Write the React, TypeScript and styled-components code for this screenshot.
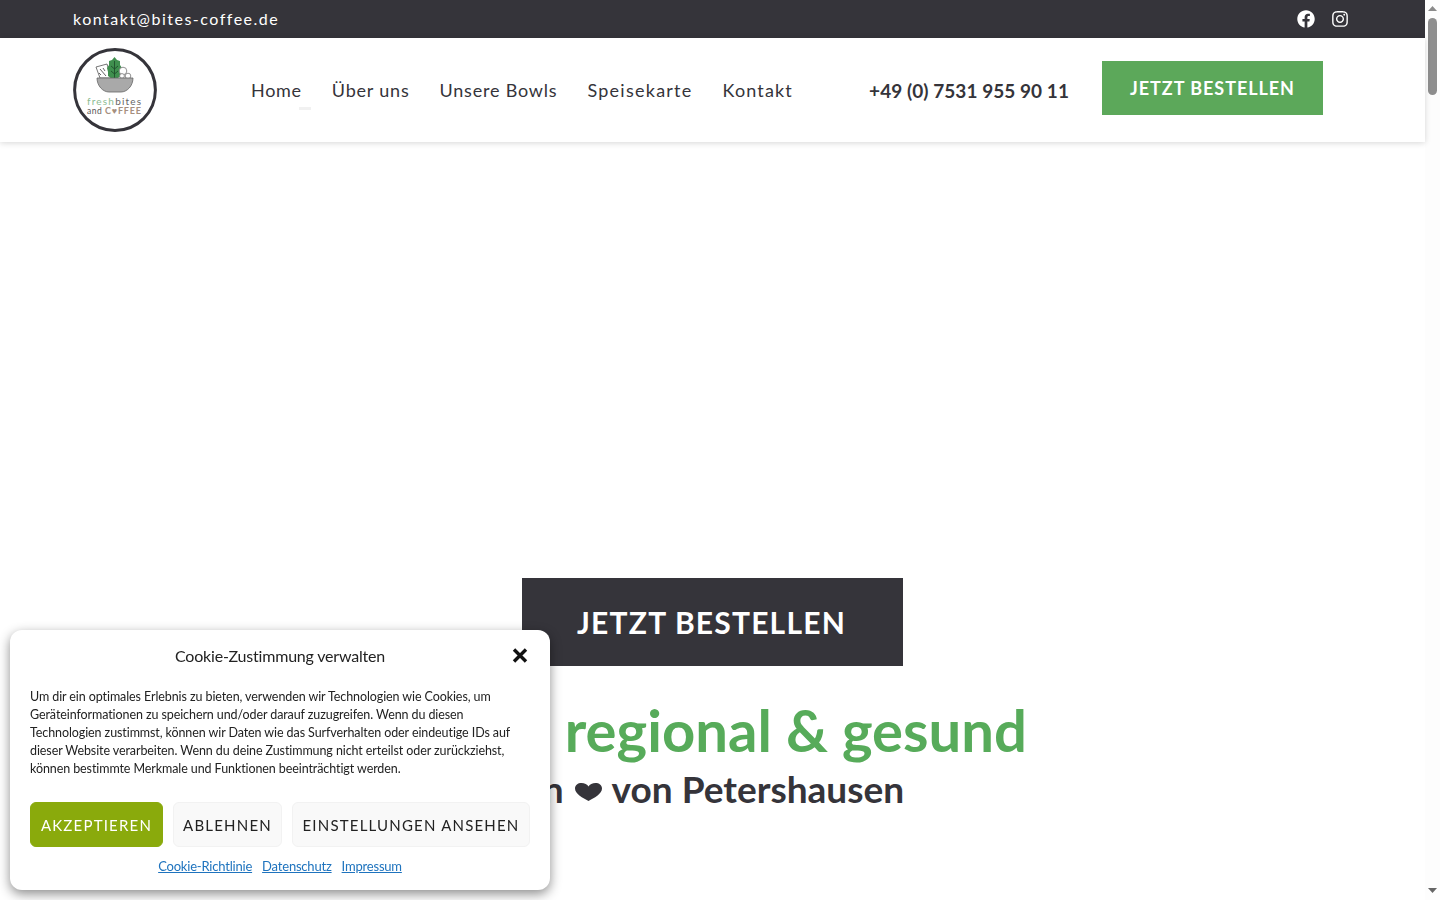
import React from "react";
import styled, { createGlobalStyle } from "styled-components";
import { FaFacebook, FaInstagram } from "react-icons/fa";

const GlobalStyle = createGlobalStyle`
  html, body {
    height: 100%;
    overflow: hidden;
  }
  body {
    margin: 0;
    background: #fff;
    font-family: "Lato", "Open Sans", sans-serif;
    color: #35343a;
  }
`;

const Page = styled.div`
  height: 100vh;
  display: flex;
  overflow: hidden;
`;

const Content = styled.div`
  flex: 1;
  min-width: 0;
`;

// the window's own scrollbar, headless chrome does not paint one
const ScrollRail = styled.div`
  width: 15px;
  flex: none;
  display: flex;
  flex-direction: column;
  align-items: center;
  background: #fdfdfd;
  padding: 6px 0 7px;
  box-sizing: border-box;
`;

const ScrollArrow = styled.svg`
  width: 9px;
  height: 5px;
  flex: none;
`;

const ScrollThumb = styled.div`
  width: 9px;
  height: 77px;
  margin-top: 7px;
  margin-bottom: auto;
  border-radius: 5px;
  background: #8e8e8e;
`;

const TopBar = styled.div`
  height: 38px;
  background: #35343a;
  display: flex;
  align-items: center;
  justify-content: space-between;
  padding: 0 76px 0 73px;
`;

const Mail = styled.a`
  color: #fff;
  font-size: 16px;
  letter-spacing: 1.5px;
  text-decoration: none;
  margin-top: -2px;
`;

const Socials = styled.div`
  display: flex;
  align-items: center;
  gap: 16px;
  color: #fff;
  font-size: 18px;
  line-height: 0;
`;

const Header = styled.header`
  position: relative;
  height: 104px;
  background: #fff;
  display: flex;
  align-items: center;
  padding: 0 102px 0 73px;
  box-shadow: 0 1px 6px rgba(0, 0, 0, 0.16);
`;

const Logo = styled.svg`
  width: 84px;
  height: 84px;
  flex: none;
`;

const LogoText = styled.text<{ $fill: string; $size: number; $weight?: number; $spacing?: number }>`
  fill: ${(p) => p.$fill};
  font-size: ${(p) => p.$size}px;
  font-weight: ${(p) => p.$weight ?? 400};
  letter-spacing: ${(p) => p.$spacing ?? 0}px;
  font-family: "Lato", sans-serif;
`;

const Nav = styled.nav`
  display: flex;
  align-items: center;
  gap: 30px;
  margin-left: 94px;
  position: relative;
`;

const NavLink = styled.a<{ $spacing: number }>`
  color: #35343a;
  font-size: 18px;
  letter-spacing: ${(p) => p.$spacing}px;
  text-decoration: none;
  white-space: nowrap;
`;

const NavMark = styled.span`
  position: absolute;
  left: 48px;
  top: 28px;
  width: 12px;
  height: 3px;
  background: #f1f1f1;
`;

const Phone = styled.div`
  margin-left: auto;
  margin-right: 33px;
  font-size: 19px;
  font-weight: 700;
  letter-spacing: 0.05px;
  white-space: nowrap;
`;

const OrderButton = styled.a`
  width: 221px;
  height: 54px;
  margin-bottom: 4px;
  background: #5ca85a;
  color: #fff;
  display: flex;
  align-items: center;
  justify-content: center;
  font-size: 18px;
  font-weight: 700;
  letter-spacing: 0.95px;
  padding-bottom: 1px;
  box-sizing: border-box;
  flex: none;
`;

const Hero = styled.main`
  padding-top: 436px;
  display: flex;
  flex-direction: column;
  align-items: center;
`;

const HeroButton = styled.a`
  width: 381px;
  height: 88px;
  background: #35343a;
  color: #fff;
  display: flex;
  align-items: center;
  justify-content: center;
  font-size: 30px;
  font-weight: 700;
  letter-spacing: 1.2px;
  box-sizing: border-box;
  padding-right: 2px;
`;

const Headline = styled.h1`
  margin: 29px 0 0;
  padding-right: 14px;
  color: #57ab5a;
  font-size: 58px;
  line-height: 70px;
  font-weight: 700;
  white-space: nowrap;
`;

const SubHeadline = styled.h2`
  margin: -1px 0 0;
  padding-left: 11px;
  font-size: 37px;
  line-height: 50px;
  font-weight: 700;
  white-space: nowrap;
`;

const Heart = styled.svg`
  width: 27px;
  height: 18px;
  vertical-align: 2px;
  margin: 0 2px;
`;

const CookieBox = styled.aside`
  position: fixed;
  left: 10px;
  bottom: 10px;
  width: 540px;
  height: 260px;
  box-sizing: border-box;
  padding: 16px 20px 0;
  background: #fff;
  border-radius: 12px;
  box-shadow: 0 4px 12px rgba(0, 0, 0, 0.45);
  color: #222;
`;

const CookieHead = styled.div`
  position: relative;
  text-align: center;
  font-size: 16px;
  line-height: 20px;
  letter-spacing: -0.2px;
`;

const Close = styled.svg`
  position: absolute;
  right: 2px;
  top: 2px;
  width: 16px;
  height: 15px;
`;

const CookieText = styled.p`
  margin: 22px 0 0;
  font-size: 12.5px;
  letter-spacing: -0.09px;
  line-height: 18px;
`;

const CookieLine = styled.span`
  display: block;
  white-space: nowrap;
`;

const CookieActions = styled.div`
  display: flex;
  gap: 10px;
  margin-top: 24px;
`;

const CookieButton = styled.button<{ $accept?: boolean; $grow?: boolean }>`
  height: 45px;
  padding: 0;
  flex: ${(p) => (p.$grow ? "1" : "none")};
  width: ${(p) => (p.$accept ? "133px" : p.$grow ? "auto" : "109px")};
  border-radius: 6px;
  border: 1px solid ${(p) => (p.$accept ? "#8aaa0c" : "#f2f2f2")};
  background: ${(p) => (p.$accept ? "#8aaa0c" : "#f9f9f9")};
  color: ${(p) => (p.$accept ? "#fff" : "#222")};
  font-family: inherit;
  font-size: 15px;
  letter-spacing: 1.2px;
`;

const CookieLinks = styled.div`
  display: flex;
  justify-content: center;
  gap: 10px;
  margin-top: 10px;
  font-size: 13px;
  letter-spacing: -0.2px;
  line-height: 18px;
`;

const CookieLink = styled.a`
  color: #1e73be;
  text-decoration: underline;
`;

const navItems = [
  { label: "Home", spacing: 0.7 },
  { label: "Über uns", spacing: 0.8 },
  { label: "Unsere Bowls", spacing: 0.8 },
  { label: "Speisekarte", spacing: 1.25 },
  { label: "Kontakt", spacing: 1.15 },
];

const cookieLines = [
  "Um dir ein optimales Erlebnis zu bieten, verwenden wir Technologien wie Cookies, um",
  "Geräteinformationen zu speichern und/oder darauf zuzugreifen. Wenn du diesen",
  "Technologien zustimmst, können wir Daten wie das Surfverhalten oder eindeutige IDs auf",
  "dieser Website verarbeiten. Wenn du deine Zustimmung nicht erteilst oder zurückziehst,",
  "können bestimmte Merkmale und Funktionen beeinträchtigt werden.",
];

const App: React.FC = () => {
  return (
    <Page>
      <GlobalStyle />
      <Content>
        <TopBar>
          <Mail href="#">kontakt@bites-coffee.de</Mail>
          <Socials>
            <FaFacebook />
            <FaInstagram />
          </Socials>
        </TopBar>

        <Header>
          <Logo viewBox="0 0 84 84">
            <circle cx="42" cy="42" r="40.4" fill="none" stroke="#35343a" strokeWidth="3" />
            <path d="M23 19 L34 16 L38 30 L27 30 Z" fill="#fff" stroke="#666" strokeWidth="0.9" />
            <path d="M27 21 L33 28 M30 20 L32 23 M26 25 L28 27" stroke="#555" strokeWidth="0.9" />
            <path
              d="M41.5 9 L44 12 L47 13 L47 17 L49 20 L48 24 L48 28 L45 30 L38 30 L35 28 L35 24 L34 20 L36 17 L36 13 L39 12 Z"
              fill="#3f8f4e"
            />
            <path d="M41.5 13 V30 M38 18 L41.5 21 L45 18 M38 23 L41.5 26 L45 23" stroke="#1f4f2b" strokeWidth="0.9" fill="none" />
            <circle cx="50" cy="23" r="3.8" fill="#fff" stroke="#777" strokeWidth="0.8" />
            <circle cx="49" cy="28" r="2.4" fill="#fff" stroke="#777" strokeWidth="0.8" />
            <circle cx="55" cy="28" r="2.8" fill="#fff" stroke="#777" strokeWidth="0.8" />
            <path d="M24 30 H60 C60 38 54 44 48 44 H36 C30 44 24 38 24 30 Z" fill="#a9a9a9" stroke="#666" strokeWidth="0.8" />
            <LogoText x="14" y="57" $fill="#8cbc92" $size={10} $spacing={1.2}>
              fresh
              <tspan fill="#666">bites</tspan>
            </LogoText>
            <LogoText x="14" y="66" $fill="#555" $size={8.5} $spacing={0.5}>
              and
            </LogoText>
            <LogoText x="32" y="66" $fill="#a58f7e" $size={9} $weight={700} $spacing={0.8}>
              C♥FFEE
            </LogoText>
          </Logo>
          <Nav>
            {navItems.map((item) => (
              <NavLink href="#" key={item.label} $spacing={item.spacing}>
                {item.label}
              </NavLink>
            ))}
            <NavMark />
          </Nav>
          <Phone>+49 (0) 7531 955 90 11</Phone>
          <OrderButton>JETZT BESTELLEN</OrderButton>
        </Header>

        <Hero>
          <HeroButton>JETZT BESTELLEN</HeroButton>
          <Headline>Frisch, regional &amp; gesund</Headline>
          <SubHeadline>
            In{" "}
            <Heart viewBox="0 0 27 18">
              <path
                d="M13.5 18 C8 15 0 11 0 5.5 C0 2 3 0 6.5 0 C9.5 0 12.3 1.3 13.5 3.5 C14.7 1.3 17.5 0 20.5 0 C24 0 27 2 27 5.5 C27 11 19 15 13.5 18 Z"
                fill="#35343a"
              />
            </Heart>{" "}
            von Petershausen
          </SubHeadline>
        </Hero>
      </Content>

      <ScrollRail>
        <ScrollArrow viewBox="0 0 9 5">
          <path d="M4.5 0 L9 5 H0 Z" fill="#8a8a8a" />
        </ScrollArrow>
        <ScrollThumb />
        <ScrollArrow viewBox="0 0 9 5">
          <path d="M0 0 H9 L4.5 5 Z" fill="#666" />
        </ScrollArrow>
      </ScrollRail>

      <CookieBox>
        <CookieHead>
          Cookie-Zustimmung verwalten
          <Close viewBox="0 0 16 15">
            <path d="M2 1.5 L14 13.5 M14 1.5 L2 13.5" stroke="#111" strokeWidth="3.4" />
          </Close>
        </CookieHead>
        <CookieText>
          {cookieLines.map((line) => (
            <CookieLine key={line}>{line}</CookieLine>
          ))}
        </CookieText>
        <CookieActions>
          <CookieButton $accept>AKZEPTIEREN</CookieButton>
          <CookieButton>ABLEHNEN</CookieButton>
          <CookieButton $grow>EINSTELLUNGEN ANSEHEN</CookieButton>
        </CookieActions>
        <CookieLinks>
          <CookieLink href="#">Cookie-Richtlinie</CookieLink>
          <CookieLink href="#">Datenschutz</CookieLink>
          <CookieLink href="#">Impressum</CookieLink>
        </CookieLinks>
      </CookieBox>
    </Page>
  );
};

export default App;
